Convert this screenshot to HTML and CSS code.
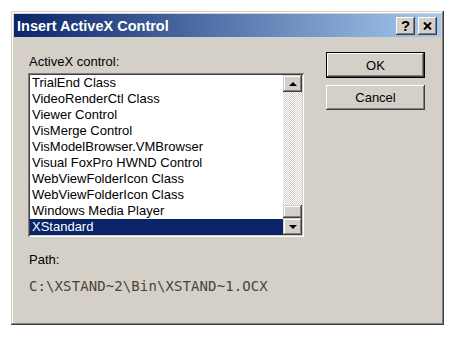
FILE: index.html
```html
<!DOCTYPE html>
<html lang="en">
<head>
	<meta charset="UTF-8">
	<title>Insert ActiveX Control</title>
	<link rel="stylesheet" href="styles.css">
</head>
<body>
	<div class="dialog">
		<div class="titlebar">
			<span class="title">Insert ActiveX Control</span>
			<div class="caption-btns">
				<span class="cap-btn help">?</span>
				<span class="cap-btn close">
					<svg width="9" height="8" viewBox="0 0 9 8"><path d="M1 0.5 L8 7.5 M8 0.5 L1 7.5" stroke="#000" stroke-width="2"/></svg>
				</span>
			</div>
		</div>
		<div class="body">
			<div class="left">
				<div class="label">ActiveX control:</div>
				<div class="listbox">
					<ul class="items">
						<li>TrialEnd Class</li>
						<li>VideoRenderCtl Class</li>
						<li>Viewer Control</li>
						<li>VisMerge Control</li>
						<li>VisModelBrowser.VMBrowser</li>
						<li>Visual FoxPro HWND Control</li>
						<li>WebViewFolderIcon Class</li>
						<li>WebViewFolderIcon Class</li>
						<li>Windows Media Player</li>
						<li class="selected">XStandard</li>
					</ul>
					<div class="scrollbar">
						<div class="sb-btn"><span class="arrow-up"></span></div>
						<div class="track">
							<div class="thumb"></div>
						</div>
						<div class="sb-btn"><span class="arrow-down"></span></div>
					</div>
				</div>
				<div class="label path-label">Path:</div>
				<div class="path">C:\XSTAND~2\Bin\XSTAND~1.OCX</div>
			</div>
			<div class="right">
				<div class="btn default">OK</div>
				<div class="btn">Cancel</div>
			</div>
		</div>
	</div>
</body>
</html>
```

FILE: styles.css
```css
body,ul{margin: 0;padding: 0;}
li{list-style: none;}
body{background: #fff; font-family: "Liberation Sans", Arial, sans-serif; font-size: 13px; color: #000;}

.dialog{width: 433px; height: 314px; margin: 11px 0 0 11px; box-sizing: border-box; padding: 3px; background: #d4d0c8;
	box-shadow: inset -1px -1px #404040, inset 1px 1px #d4d0c8, inset -2px -2px #808080, inset 2px 2px #fff;}

.titlebar{height: 23px; display: flex; align-items: center; justify-content: space-between; padding: 0 4px 0 3px;
	background: linear-gradient(to right, #0a246a, #a6caf0);}
.title{color: #fff; font-weight: bold; font-size: 14.5px;}
.caption-btns{display: flex; gap: 3px;}
.cap-btn{width: 19px; height: 18px; box-sizing: border-box; display: flex; align-items: center; justify-content: center; background: #d4d0c8;
	font-weight: bold; font-size: 15px; line-height: 18px;
	box-shadow: inset -1px -1px #404040, inset 1px 1px #fff, inset -2px -2px #808080;}

.body{display: flex; padding: 16px 0 0 14px;}
.left{width: 276px;}
.label{height: 16px; line-height: 16px; margin-top: 1px; padding-left: 1px;}

.listbox{display: flex; height: 164px; margin-top: 3px; box-sizing: border-box; padding: 2px; background: #fff;
	box-shadow: inset 1px 1px #808080, inset -1px -1px #fff, inset 2px 2px #404040, inset -2px -2px #d4d0c8;}
.items{flex: 1;}
.items li{height: 16px; line-height: 16px; padding-left: 2px; white-space: nowrap;}
.items li.selected{background: #0a246a; color: #fff;}

.scrollbar{width: 19px; display: flex; flex-direction: column;}
.sb-btn{height: 17px; flex: none; display: flex; align-items: center; justify-content: center; background: #d4d0c8;
	box-shadow: inset -1px -1px #404040, inset 1px 1px #d4d0c8, inset -2px -2px #808080, inset 2px 2px #fff;}
.arrow-up{width: 0; height: 0; border-left: 4px solid transparent; border-right: 4px solid transparent; border-bottom: 4px solid #000;}
.arrow-down{width: 0; height: 0; border-left: 4px solid transparent; border-right: 4px solid transparent; border-top: 4px solid #000;}
.track{flex: 1; display: flex; flex-direction: column; justify-content: flex-end;
	background: repeating-conic-gradient(#fff 0 25%, #d4d0c8 0 50%) 0 0/2px 2px;}
.thumb{height: 13px; background: #d4d0c8;
	box-shadow: inset -1px -1px #404040, inset 1px 1px #d4d0c8, inset -2px -2px #808080, inset 2px 2px #fff;}

.path-label{margin-top: 15px;}
.path{margin-top: 10px; height: 16px; line-height: 16px; padding-left: 1px; font-family: "DejaVu Sans Mono", monospace; font-size: 14px; letter-spacing: 0.1px; color: #4a4438;}

.right{margin-left: 22px; display: flex; flex-direction: column; gap: 7px; margin-top: -1px;}
.btn{width: 99px; height: 25px; box-sizing: border-box; display: flex; align-items: center; justify-content: center; background: #d4d0c8;
	box-shadow: inset -1px -1px #404040, inset 1px 1px #fff, inset -2px -2px #808080;}
.btn.default{height: 26px; border: 1px solid #000;}
```
